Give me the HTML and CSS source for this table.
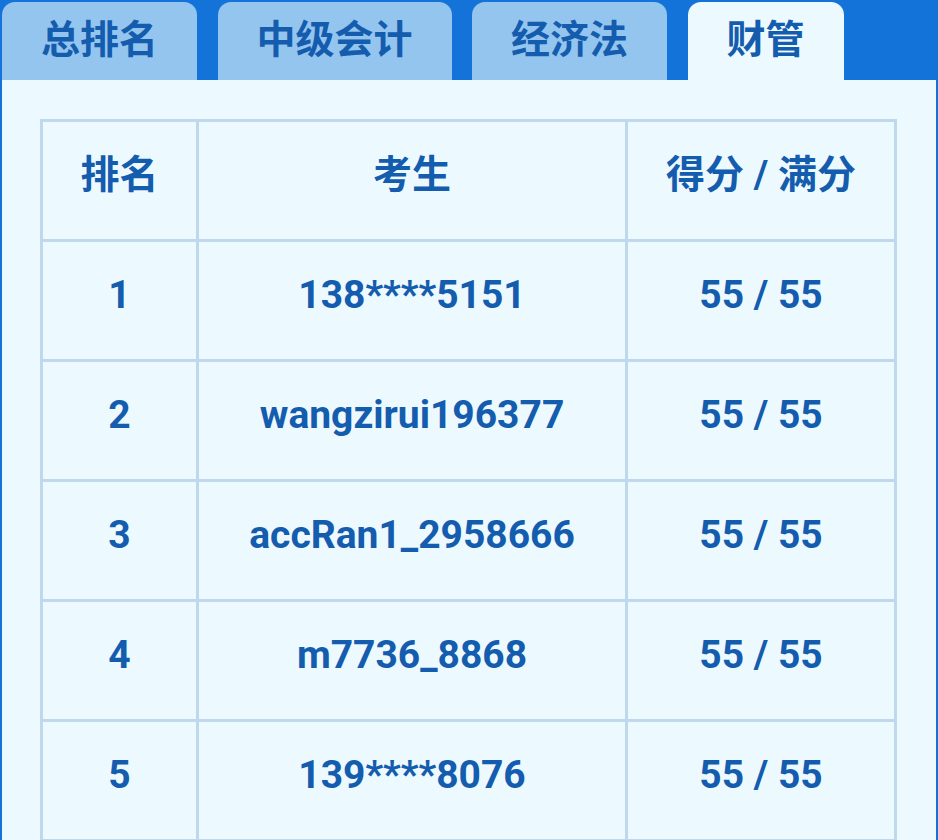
FILE: index.html
```html
<!DOCTYPE html>
<html lang="zh">
<head>
<meta charset="utf-8">
<title>排名</title>
<link rel="stylesheet" href="styles.css">
</head>
<body>
<div class="page">
  <div class="tabs">
    <div class="tab">总排名</div>
    <div class="tab">中级会计</div>
    <div class="tab">经济法</div>
    <div class="tab active">财管</div>
  </div>
  <div class="panel">
    <div class="table">
      <div class="cell head">排名</div>
      <div class="cell head">考生</div>
      <div class="cell head">得分 / 满分</div>
      <div class="cell">1</div>
      <div class="cell">138****5151</div>
      <div class="cell">55 / 55</div>
      <div class="cell">2</div>
      <div class="cell">wangzirui196377</div>
      <div class="cell">55 / 55</div>
      <div class="cell">3</div>
      <div class="cell">accRan1_2958666</div>
      <div class="cell">55 / 55</div>
      <div class="cell">4</div>
      <div class="cell">m7736_8868</div>
      <div class="cell">55 / 55</div>
      <div class="cell">5</div>
      <div class="cell">139****8076</div>
      <div class="cell">55 / 55</div>
    </div>
  </div>
</div>
</body>
</html>
```

FILE: styles.css
```css
html, body {
  margin: 0;
  padding: 0;
  height: 100%;
  overflow: hidden;
}
body {
  background: #1373d8;
  font-family: Roboto, "Noto Sans CJK SC", sans-serif;
  font-weight: 700;
  color: #145cae;
}
.page {
  display: flex;
  flex-direction: column;
  height: 840px;
  padding: 0 2px;
}
.tabs {
  display: flex;
  gap: 20.5px;
  padding-top: 2px;
  height: 78px;
}
.tab {
  background: #94c5ef;
  border-radius: 13px 13px 0 0;
  padding: 0 39px;
  font-size: 39px;
  line-height: 76px;
  height: 78px;
  box-sizing: border-box;
}
.tab.active {
  background: #ecf9fe;
}
.panel {
  flex: 1;
  background: #ecf9fe;
  padding: 39px 38px 0 38px;
}
.table {
  display: grid;
  grid-template-columns: 153px 426px 266px;
  grid-auto-rows: 117px;
  gap: 3px;
  padding: 3px;
  background: #bfd8ec;
  width: max-content;
}
.cell {
  background: #ecf9fe;
  display: flex;
  align-items: center;
  justify-content: center;
  font-size: 39px;
  padding-bottom: 11px;
  box-sizing: border-box;
}
.cell.head {
  padding-bottom: 20px;
}
```
